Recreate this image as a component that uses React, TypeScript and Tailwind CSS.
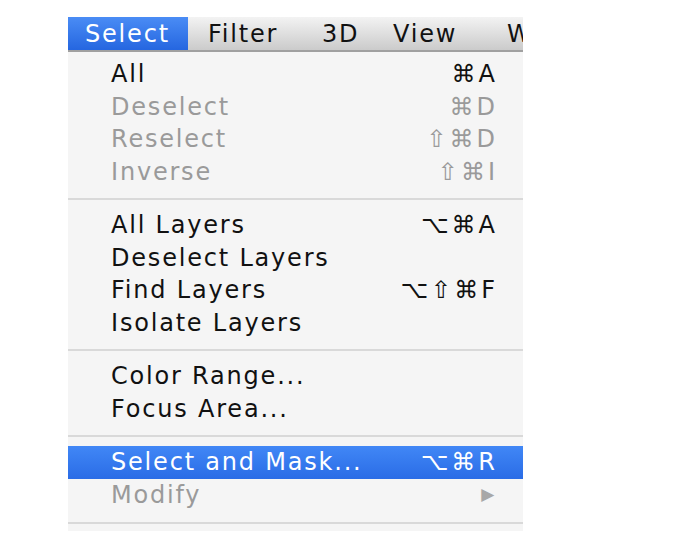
import React from "react";

type Item = { label: string; sc?: string; disabled?: boolean; active?: boolean; arrow?: boolean };

const groups: Item[][] = [
  [
    { label: "All", sc: "⌘A" },
    { label: "Deselect", sc: "⌘D", disabled: true },
    { label: "Reselect", sc: "⇧⌘D", disabled: true },
    { label: "Inverse", sc: "⇧⌘I", disabled: true },
  ],
  [
    { label: "All Layers", sc: "⌥⌘A" },
    { label: "Deselect Layers" },
    { label: "Find Layers", sc: "⌥⇧⌘F" },
    { label: "Isolate Layers" },
  ],
  [{ label: "Color Range..." }, { label: "Focus Area..." }],
  [
    { label: "Select and Mask...", sc: "⌥⌘R", active: true },
    { label: "Modify", disabled: true, arrow: true },
  ],
];

function Row({ it }: { it: Item }) {
  const color = it.active ? "text-white" : it.disabled ? "text-[#9a9a9a]" : "text-[#111]";
  return (
    <div
      className={`flex h-[32.5px] items-center justify-between pl-[43px] pr-[25px] ${
        it.active ? "bg-gradient-to-b from-[#4187f6] to-[#2a6ce6]" : ""
      } ${color}`}
    >
      <span>{it.label}</span>
      {it.sc && <span className="tracking-[3px]">{it.sc}</span>}
      {it.arrow && <span className="pr-[2px] text-[17px] text-[#a8a8a8]">▶</span>}
    </div>
  );
}

function Sep() {
  return (
    <div className="flex h-[21px] items-center">
      <div className="h-[2px] w-full bg-[#d9d9d9]" />
    </div>
  );
}

export default function App() {
  return (
    <div
      className="h-[552px] w-[673px] bg-white pl-[68px] pt-[17px]"
      style={{ fontFamily: '"DejaVu Sans", Verdana, sans-serif' }}
    >
      <div className="w-[455px] overflow-hidden tracking-[1.8px]">
        <div className="flex h-[35px] items-center overflow-hidden border-b-2 border-[#a0a0a0] bg-gradient-to-b from-[#f3f3f3] to-[#cbcbcb] text-[24px] text-[#111] whitespace-nowrap">
          <div className="flex h-full w-[120px] shrink-0 items-center bg-gradient-to-b from-[#4a8cf5] to-[#2566e0] pl-[17px] text-white">
            Select
          </div>
          <div className="ml-[20px] w-[114px] shrink-0">Filter</div>
          <div className="w-[71px] shrink-0">3D</div>
          <div className="w-[114px] shrink-0">View</div>
          <div className="w-[16px] shrink-0 overflow-hidden">W</div>
        </div>
        <div className="bg-[#f5f5f5] pt-[6px] pb-[7px] text-[24px]">
          {groups.map((g, gi) => (
            <React.Fragment key={gi}>
              {gi > 0 && <Sep />}
              {g.map((it, i) => (
                <Row key={i} it={it} />
              ))}
            </React.Fragment>
          ))}
          <div className="mt-[11px] h-[2px] bg-[#d9d9d9]" />
        </div>
      </div>
    </div>
  );
}
